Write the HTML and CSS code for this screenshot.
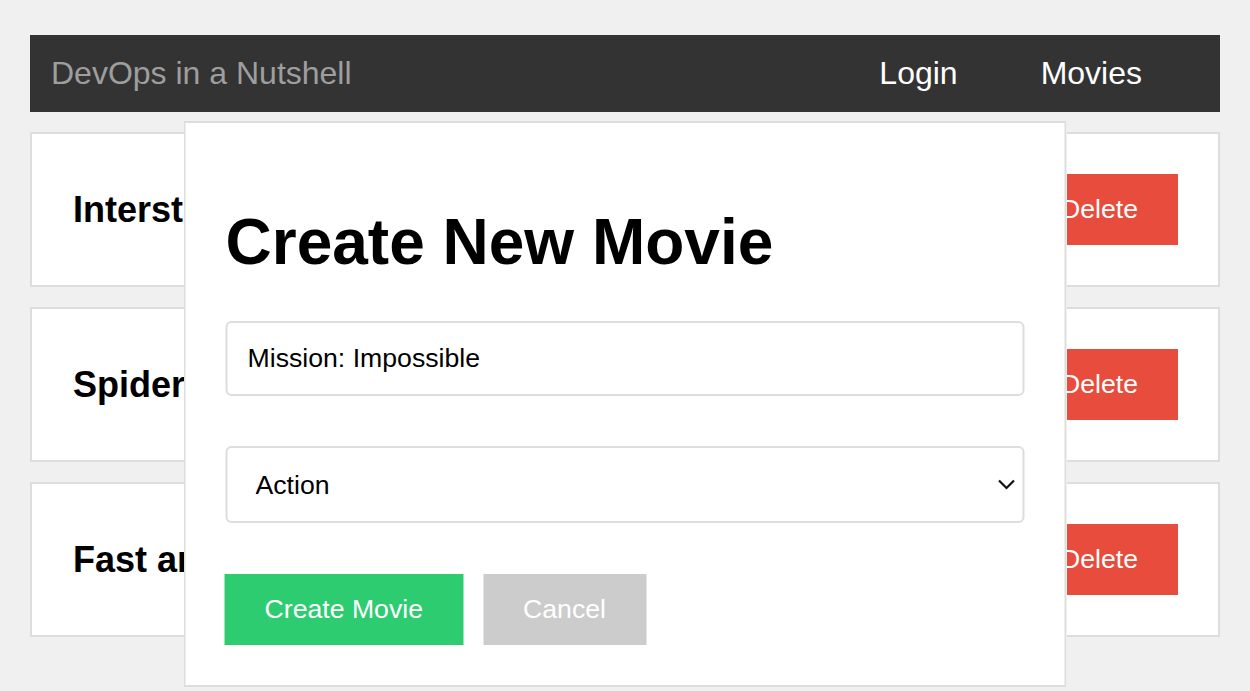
FILE: index.html
```html
<!DOCTYPE html>
<html lang="en">
<head>
<meta charset="utf-8">
<title>DevOps in a Nutshell</title>
<link rel="stylesheet" href="styles.css">
</head>
<body>
  <nav class="navbar">
    <span class="brand">DevOps in a Nutshell</span>
    <div class="links">
      <a class="link" href="#">Login</a>
      <a class="link" href="#">Movies</a>
    </div>
  </nav>

  <main class="list">
    <div class="card">
      <h2 class="title">Interstellar</h2>
      <button class="btn btn-delete">Delete</button>
    </div>
    <div class="card">
      <h2 class="title">Spider-Man</h2>
      <button class="btn btn-delete">Delete</button>
    </div>
    <div class="card">
      <h2 class="title">Fast and Furious</h2>
      <button class="btn btn-delete">Delete</button>
    </div>
  </main>

  <div class="modal">
    <h1 class="modal-title">Create New Movie</h1>
    <input class="field" type="text" value="Mission: Impossible">
    <div class="select-wrap">
      <select class="field select">
        <option>Action</option>
        <option>Comedy</option>
        <option>Drama</option>
      </select>
      <svg class="chevron" width="18" height="11" viewBox="0 0 18 11"><path d="M1.5 1.5 L9 9 L16.5 1.5" fill="none" stroke="#111" stroke-width="2.2"/></svg>
    </div>
    <div class="actions">
      <button class="btn btn-create">Create Movie</button>
      <button class="btn btn-cancel">Cancel</button>
    </div>
  </div>
</body>
</html>
```

FILE: styles.css
```css
* { box-sizing: border-box; }

body {
  margin: 0;
  padding: 35px 30px;
  background: #f0f0f0;
  font-family: "Liberation Sans", Arial, sans-serif;
  color: #000;
}

.navbar {
  display: flex;
  align-items: center;
  background: #333;
  padding: 20px 0 20px 21px;
}

.brand {
  font-size: 32px;
  color: #9e9e9e;
}

.links {
  display: flex;
  gap: 83px;
  margin-left: auto;
  margin-right: 78px;
}

.link {
  font-size: 32px;
  color: #fff;
  text-decoration: none;
}

.list {
  display: flex;
  flex-direction: column;
  gap: 20px;
  margin-top: 20px;
}

.card {
  display: flex;
  align-items: center;
  justify-content: space-between;
  background: #fff;
  border: 2px solid #ddd;
  padding: 40px 40px 40px 41px;
}

.title {
  margin: 0;
  font-size: 36px;
  font-weight: bold;
}

.btn {
  border: none;
  font-family: "Liberation Sans", Arial, sans-serif;
  font-size: 26.67px;
  color: #fff;
  padding: 20px 40px;
  line-height: normal;
  cursor: pointer;
}

.btn-delete { background: #e74c3c; }
.btn-create { background: #2ecc71; }
.btn-cancel { background: #ccc; }

.modal {
  position: fixed;
  top: 121px;
  left: 50%;
  transform: translateX(-50%);
  width: 883px;
  background: #fff;
  border: 2px solid #ddd;
  padding: 40px;
}

.modal-title {
  font-size: 64px;
  font-weight: bold;
  margin: 42px 0 42px 0;
}

.field {
  display: block;
  width: 100%;
  font-family: "Liberation Sans", Arial, sans-serif;
  font-size: 26.67px;
  color: #000;
  background: #fff;
  border: 2px solid #ddd;
  border-radius: 6px;
  padding: 20px;
  margin: 0 0 50px 0;
  outline: none;
}

.select-wrap {
  position: relative;
  margin-bottom: 51px;
}

.select {
  appearance: none;
  -webkit-appearance: none;
  height: 77px;
  padding: 0 40px 0 28px;
  margin: 0;
}

.chevron {
  position: absolute;
  right: 9px;
  top: 33px;
  pointer-events: none;
}

.actions {
  display: flex;
  gap: 20px;
  margin-left: -1px;
}
```
